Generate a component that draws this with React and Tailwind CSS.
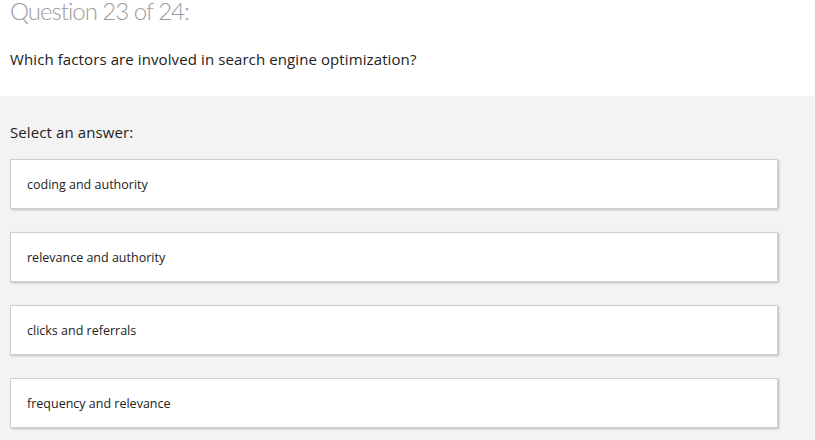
export default function App() {
  const answers = [
    "coding and authority",
    "relevance and authority",
    "clicks and referrals",
    "frequency and relevance",
  ];
  return (
    <div className="w-[815px] h-[440px] overflow-hidden bg-white" style={{ fontFamily: '"Open Sans", "Noto Sans", sans-serif' }}>
      <div className="h-[96px] bg-white px-[10px] flex flex-col">
        <div className="text-[24px] leading-[22px] font-light text-[#9b9ba3] tracking-[-1px]" style={{ fontFamily: 'Lato, "Open Sans", sans-serif' }}>Question 23 of 24:</div>
        <div className="text-[15px] leading-[20px] text-[#222] mt-[27px] tracking-[0.1px]">Which factors are involved in search engine optimization?</div>
      </div>
      <div className="h-[344px] bg-[#f3f3f3] pl-[10px] pr-[37px] pt-[26px] flex flex-col">
        <div className="text-[15px] leading-[20px] text-[#222] tracking-[0.1px]">Select an answer:</div>
        <div className="mt-[17px] flex flex-col gap-[23px]">
          {answers.map((a) => (
            <div key={a} className="h-[50px] bg-white border border-[#cfcfcf] shadow-[1px_1px_2px_rgba(0,0,0,0.22)] flex items-center pl-[16px] pt-[2px]">
              <span className="text-[12.5px] leading-[16px] text-[#222]">{a}</span>
            </div>
          ))}
        </div>
      </div>
    </div>
  );
}
